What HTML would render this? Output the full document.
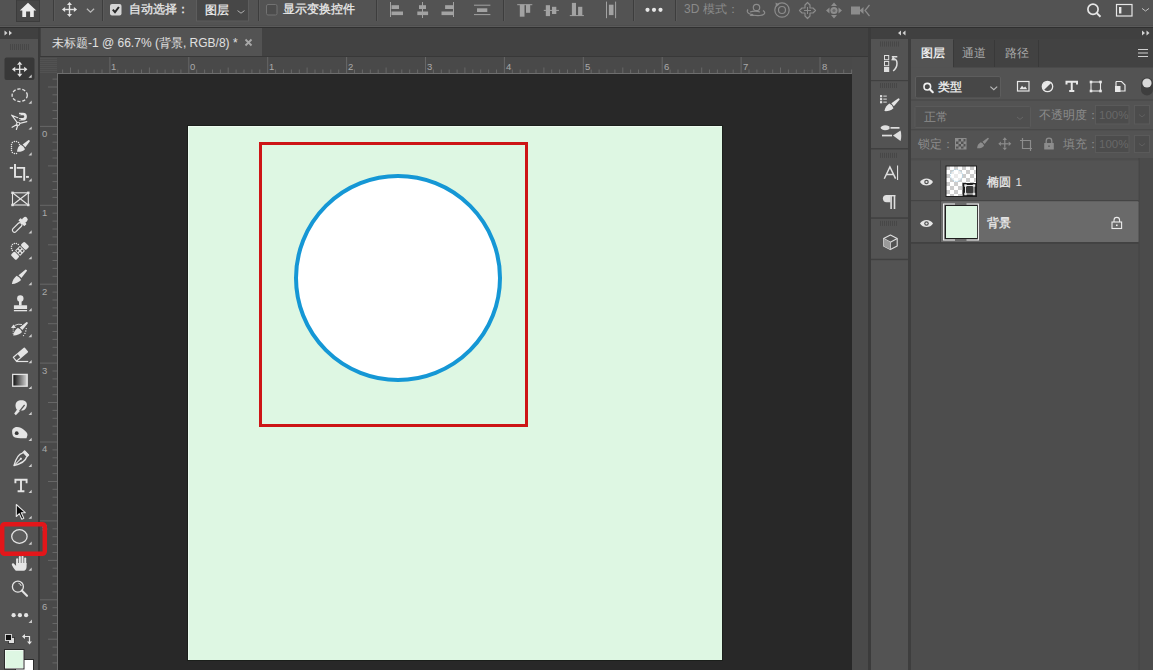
<!DOCTYPE html>
<html><head><meta charset="utf-8">
<style>
*{margin:0;padding:0;box-sizing:border-box}
html,body{width:1153px;height:670px;overflow:hidden;background:#535353;font-family:"Liberation Sans",sans-serif;color:#e6e6e6}
.a{position:absolute}
.t{position:absolute;white-space:nowrap;line-height:1}
.b{-webkit-text-stroke:0.3px currentColor}
svg.s{position:absolute;left:0;top:0;width:1153px;height:670px;overflow:visible}
</style></head><body>

<div class="a" style="left:0px;top:0px;width:1153px;height:27px;background:#535353;"></div>
<div class="a" style="left:0px;top:25px;width:1153px;height:1px;background:#4e4e4e;"></div>
<div class="a" style="left:0px;top:26px;width:1153px;height:1px;background:#5a5a5a;"></div>
<div class="a" style="left:40px;top:27px;width:829px;height:29px;background:#424242;"></div>
<div class="a" style="left:41px;top:28px;width:221px;height:28px;background:#535353;"></div>
<div class="a" style="left:40px;top:56px;width:829px;height:1px;background:#383838;"></div>
<div class="a" style="left:0px;top:27px;width:38px;height:643px;background:#535353;"></div>
<div class="a" style="left:0px;top:27px;width:38px;height:12px;background:#404040;"></div>
<div class="a" style="left:38px;top:27px;width:2px;height:643px;background:#3a3a3a;"></div>
<div class="a" style="left:40px;top:57px;width:816px;height:16px;background:#494949;"></div>
<div class="a" style="left:40px;top:57px;width:17px;height:613px;background:#494949;"></div>
<div class="a" style="left:58px;top:74px;width:794px;height:596px;background:#282828;"></div>
<div class="a" style="left:852px;top:57px;width:16px;height:613px;background:#4a4a4a;"></div>
<div class="a" style="left:57px;top:73px;width:795px;height:1px;background:#6e6e6e;"></div>
<div class="a" style="left:57px;top:73px;width:1px;height:597px;background:#6e6e6e;"></div>
<div class="a" style="left:187px;top:125px;width:536px;height:536px;background:#1b1f1b;"></div>
<div class="a" style="left:188px;top:126px;width:534px;height:534px;background:#eefcf0;"></div>
<div class="a" style="left:189px;top:127px;width:533px;height:533px;background:#def7e3;"></div>
<div class="a" style="left:259px;top:142px;width:269px;height:285px;border:3px solid #cd1516"></div>
<div class="a" style="left:294px;top:174px;width:208px;height:208px;border-radius:50%;border:4px solid #1597d5;background:#fff"></div>
<div class="a" style="left:868px;top:27px;width:3px;height:643px;background:#3b3b3b;"></div>
<div class="a" style="left:871px;top:27px;width:282px;height:12px;background:#404040;"></div>
<div class="a" style="left:871px;top:39px;width:37px;height:631px;background:#535353;"></div>
<div class="a" style="left:908px;top:39px;width:3px;height:631px;background:#3e3e3e;"></div>
<div class="a" style="left:911px;top:39px;width:242px;height:631px;background:#535353;"></div>
<div class="a" style="left:0px;top:27px;width:1153px;height:1px;background:#303030;"></div>
<svg class="s" viewBox="0 0 1153 670"><line x1="62.6" y1="69.5" x2="62.6" y2="73" stroke="#676767" stroke-width="1"/>
<line x1="70.5" y1="67.5" x2="70.5" y2="73" stroke="#676767" stroke-width="1"/>
<line x1="78.3" y1="69.5" x2="78.3" y2="73" stroke="#676767" stroke-width="1"/>
<line x1="86.2" y1="69.5" x2="86.2" y2="73" stroke="#676767" stroke-width="1"/>
<line x1="94.1" y1="69.5" x2="94.1" y2="73" stroke="#676767" stroke-width="1"/>
<line x1="102.0" y1="69.5" x2="102.0" y2="73" stroke="#676767" stroke-width="1"/>
<line x1="109.9" y1="57" x2="109.9" y2="73" stroke="#676767" stroke-width="1"/>
<line x1="117.8" y1="69.5" x2="117.8" y2="73" stroke="#676767" stroke-width="1"/>
<line x1="125.7" y1="69.5" x2="125.7" y2="73" stroke="#676767" stroke-width="1"/>
<line x1="133.6" y1="69.5" x2="133.6" y2="73" stroke="#676767" stroke-width="1"/>
<line x1="141.5" y1="69.5" x2="141.5" y2="73" stroke="#676767" stroke-width="1"/>
<line x1="149.4" y1="67.5" x2="149.4" y2="73" stroke="#676767" stroke-width="1"/>
<line x1="157.2" y1="69.5" x2="157.2" y2="73" stroke="#676767" stroke-width="1"/>
<line x1="165.1" y1="69.5" x2="165.1" y2="73" stroke="#676767" stroke-width="1"/>
<line x1="173.0" y1="69.5" x2="173.0" y2="73" stroke="#676767" stroke-width="1"/>
<line x1="180.9" y1="69.5" x2="180.9" y2="73" stroke="#676767" stroke-width="1"/>
<line x1="188.8" y1="57" x2="188.8" y2="73" stroke="#676767" stroke-width="1"/>
<line x1="196.7" y1="69.5" x2="196.7" y2="73" stroke="#676767" stroke-width="1"/>
<line x1="204.6" y1="69.5" x2="204.6" y2="73" stroke="#676767" stroke-width="1"/>
<line x1="212.5" y1="69.5" x2="212.5" y2="73" stroke="#676767" stroke-width="1"/>
<line x1="220.4" y1="69.5" x2="220.4" y2="73" stroke="#676767" stroke-width="1"/>
<line x1="228.2" y1="67.5" x2="228.2" y2="73" stroke="#676767" stroke-width="1"/>
<line x1="236.1" y1="69.5" x2="236.1" y2="73" stroke="#676767" stroke-width="1"/>
<line x1="244.0" y1="69.5" x2="244.0" y2="73" stroke="#676767" stroke-width="1"/>
<line x1="251.9" y1="69.5" x2="251.9" y2="73" stroke="#676767" stroke-width="1"/>
<line x1="259.8" y1="69.5" x2="259.8" y2="73" stroke="#676767" stroke-width="1"/>
<line x1="267.7" y1="57" x2="267.7" y2="73" stroke="#676767" stroke-width="1"/>
<line x1="275.6" y1="69.5" x2="275.6" y2="73" stroke="#676767" stroke-width="1"/>
<line x1="283.5" y1="69.5" x2="283.5" y2="73" stroke="#676767" stroke-width="1"/>
<line x1="291.4" y1="69.5" x2="291.4" y2="73" stroke="#676767" stroke-width="1"/>
<line x1="299.3" y1="69.5" x2="299.3" y2="73" stroke="#676767" stroke-width="1"/>
<line x1="307.1" y1="67.5" x2="307.1" y2="73" stroke="#676767" stroke-width="1"/>
<line x1="315.0" y1="69.5" x2="315.0" y2="73" stroke="#676767" stroke-width="1"/>
<line x1="322.9" y1="69.5" x2="322.9" y2="73" stroke="#676767" stroke-width="1"/>
<line x1="330.8" y1="69.5" x2="330.8" y2="73" stroke="#676767" stroke-width="1"/>
<line x1="338.7" y1="69.5" x2="338.7" y2="73" stroke="#676767" stroke-width="1"/>
<line x1="346.6" y1="57" x2="346.6" y2="73" stroke="#676767" stroke-width="1"/>
<line x1="354.5" y1="69.5" x2="354.5" y2="73" stroke="#676767" stroke-width="1"/>
<line x1="362.4" y1="69.5" x2="362.4" y2="73" stroke="#676767" stroke-width="1"/>
<line x1="370.3" y1="69.5" x2="370.3" y2="73" stroke="#676767" stroke-width="1"/>
<line x1="378.2" y1="69.5" x2="378.2" y2="73" stroke="#676767" stroke-width="1"/>
<line x1="386.1" y1="67.5" x2="386.1" y2="73" stroke="#676767" stroke-width="1"/>
<line x1="393.9" y1="69.5" x2="393.9" y2="73" stroke="#676767" stroke-width="1"/>
<line x1="401.8" y1="69.5" x2="401.8" y2="73" stroke="#676767" stroke-width="1"/>
<line x1="409.7" y1="69.5" x2="409.7" y2="73" stroke="#676767" stroke-width="1"/>
<line x1="417.6" y1="69.5" x2="417.6" y2="73" stroke="#676767" stroke-width="1"/>
<line x1="425.5" y1="57" x2="425.5" y2="73" stroke="#676767" stroke-width="1"/>
<line x1="433.4" y1="69.5" x2="433.4" y2="73" stroke="#676767" stroke-width="1"/>
<line x1="441.3" y1="69.5" x2="441.3" y2="73" stroke="#676767" stroke-width="1"/>
<line x1="449.2" y1="69.5" x2="449.2" y2="73" stroke="#676767" stroke-width="1"/>
<line x1="457.1" y1="69.5" x2="457.1" y2="73" stroke="#676767" stroke-width="1"/>
<line x1="464.9" y1="67.5" x2="464.9" y2="73" stroke="#676767" stroke-width="1"/>
<line x1="472.8" y1="69.5" x2="472.8" y2="73" stroke="#676767" stroke-width="1"/>
<line x1="480.7" y1="69.5" x2="480.7" y2="73" stroke="#676767" stroke-width="1"/>
<line x1="488.6" y1="69.5" x2="488.6" y2="73" stroke="#676767" stroke-width="1"/>
<line x1="496.5" y1="69.5" x2="496.5" y2="73" stroke="#676767" stroke-width="1"/>
<line x1="504.4" y1="57" x2="504.4" y2="73" stroke="#676767" stroke-width="1"/>
<line x1="512.3" y1="69.5" x2="512.3" y2="73" stroke="#676767" stroke-width="1"/>
<line x1="520.2" y1="69.5" x2="520.2" y2="73" stroke="#676767" stroke-width="1"/>
<line x1="528.1" y1="69.5" x2="528.1" y2="73" stroke="#676767" stroke-width="1"/>
<line x1="536.0" y1="69.5" x2="536.0" y2="73" stroke="#676767" stroke-width="1"/>
<line x1="543.9" y1="67.5" x2="543.9" y2="73" stroke="#676767" stroke-width="1"/>
<line x1="551.7" y1="69.5" x2="551.7" y2="73" stroke="#676767" stroke-width="1"/>
<line x1="559.6" y1="69.5" x2="559.6" y2="73" stroke="#676767" stroke-width="1"/>
<line x1="567.5" y1="69.5" x2="567.5" y2="73" stroke="#676767" stroke-width="1"/>
<line x1="575.4" y1="69.5" x2="575.4" y2="73" stroke="#676767" stroke-width="1"/>
<line x1="583.3" y1="57" x2="583.3" y2="73" stroke="#676767" stroke-width="1"/>
<line x1="591.2" y1="69.5" x2="591.2" y2="73" stroke="#676767" stroke-width="1"/>
<line x1="599.1" y1="69.5" x2="599.1" y2="73" stroke="#676767" stroke-width="1"/>
<line x1="607.0" y1="69.5" x2="607.0" y2="73" stroke="#676767" stroke-width="1"/>
<line x1="614.9" y1="69.5" x2="614.9" y2="73" stroke="#676767" stroke-width="1"/>
<line x1="622.8" y1="67.5" x2="622.8" y2="73" stroke="#676767" stroke-width="1"/>
<line x1="630.6" y1="69.5" x2="630.6" y2="73" stroke="#676767" stroke-width="1"/>
<line x1="638.5" y1="69.5" x2="638.5" y2="73" stroke="#676767" stroke-width="1"/>
<line x1="646.4" y1="69.5" x2="646.4" y2="73" stroke="#676767" stroke-width="1"/>
<line x1="654.3" y1="69.5" x2="654.3" y2="73" stroke="#676767" stroke-width="1"/>
<line x1="662.2" y1="57" x2="662.2" y2="73" stroke="#676767" stroke-width="1"/>
<line x1="670.1" y1="69.5" x2="670.1" y2="73" stroke="#676767" stroke-width="1"/>
<line x1="678.0" y1="69.5" x2="678.0" y2="73" stroke="#676767" stroke-width="1"/>
<line x1="685.9" y1="69.5" x2="685.9" y2="73" stroke="#676767" stroke-width="1"/>
<line x1="693.8" y1="69.5" x2="693.8" y2="73" stroke="#676767" stroke-width="1"/>
<line x1="701.7" y1="67.5" x2="701.7" y2="73" stroke="#676767" stroke-width="1"/>
<line x1="709.5" y1="69.5" x2="709.5" y2="73" stroke="#676767" stroke-width="1"/>
<line x1="717.4" y1="69.5" x2="717.4" y2="73" stroke="#676767" stroke-width="1"/>
<line x1="725.3" y1="69.5" x2="725.3" y2="73" stroke="#676767" stroke-width="1"/>
<line x1="733.2" y1="69.5" x2="733.2" y2="73" stroke="#676767" stroke-width="1"/>
<line x1="741.1" y1="57" x2="741.1" y2="73" stroke="#676767" stroke-width="1"/>
<line x1="749.0" y1="69.5" x2="749.0" y2="73" stroke="#676767" stroke-width="1"/>
<line x1="756.9" y1="69.5" x2="756.9" y2="73" stroke="#676767" stroke-width="1"/>
<line x1="764.8" y1="69.5" x2="764.8" y2="73" stroke="#676767" stroke-width="1"/>
<line x1="772.7" y1="69.5" x2="772.7" y2="73" stroke="#676767" stroke-width="1"/>
<line x1="780.5" y1="67.5" x2="780.5" y2="73" stroke="#676767" stroke-width="1"/>
<line x1="788.4" y1="69.5" x2="788.4" y2="73" stroke="#676767" stroke-width="1"/>
<line x1="796.3" y1="69.5" x2="796.3" y2="73" stroke="#676767" stroke-width="1"/>
<line x1="804.2" y1="69.5" x2="804.2" y2="73" stroke="#676767" stroke-width="1"/>
<line x1="812.1" y1="69.5" x2="812.1" y2="73" stroke="#676767" stroke-width="1"/>
<line x1="820.0" y1="57" x2="820.0" y2="73" stroke="#676767" stroke-width="1"/>
<line x1="827.9" y1="69.5" x2="827.9" y2="73" stroke="#676767" stroke-width="1"/>
<line x1="835.8" y1="69.5" x2="835.8" y2="73" stroke="#676767" stroke-width="1"/>
<line x1="843.7" y1="69.5" x2="843.7" y2="73" stroke="#676767" stroke-width="1"/>
<line x1="851.6" y1="69.5" x2="851.6" y2="73" stroke="#676767" stroke-width="1"/>
<line x1="52.5" y1="79.1" x2="57" y2="79.1" stroke="#676767" stroke-width="1"/>
<line x1="48" y1="87.0" x2="57" y2="87.0" stroke="#676767" stroke-width="1"/>
<line x1="52.5" y1="94.8" x2="57" y2="94.8" stroke="#676767" stroke-width="1"/>
<line x1="52.5" y1="102.7" x2="57" y2="102.7" stroke="#676767" stroke-width="1"/>
<line x1="52.5" y1="110.6" x2="57" y2="110.6" stroke="#676767" stroke-width="1"/>
<line x1="52.5" y1="118.5" x2="57" y2="118.5" stroke="#676767" stroke-width="1"/>
<line x1="40" y1="126.4" x2="57" y2="126.4" stroke="#676767" stroke-width="1"/>
<line x1="52.5" y1="134.3" x2="57" y2="134.3" stroke="#676767" stroke-width="1"/>
<line x1="52.5" y1="142.2" x2="57" y2="142.2" stroke="#676767" stroke-width="1"/>
<line x1="52.5" y1="150.1" x2="57" y2="150.1" stroke="#676767" stroke-width="1"/>
<line x1="52.5" y1="158.0" x2="57" y2="158.0" stroke="#676767" stroke-width="1"/>
<line x1="48" y1="165.9" x2="57" y2="165.9" stroke="#676767" stroke-width="1"/>
<line x1="52.5" y1="173.7" x2="57" y2="173.7" stroke="#676767" stroke-width="1"/>
<line x1="52.5" y1="181.6" x2="57" y2="181.6" stroke="#676767" stroke-width="1"/>
<line x1="52.5" y1="189.5" x2="57" y2="189.5" stroke="#676767" stroke-width="1"/>
<line x1="52.5" y1="197.4" x2="57" y2="197.4" stroke="#676767" stroke-width="1"/>
<line x1="40" y1="205.3" x2="57" y2="205.3" stroke="#676767" stroke-width="1"/>
<line x1="52.5" y1="213.2" x2="57" y2="213.2" stroke="#676767" stroke-width="1"/>
<line x1="52.5" y1="221.1" x2="57" y2="221.1" stroke="#676767" stroke-width="1"/>
<line x1="52.5" y1="229.0" x2="57" y2="229.0" stroke="#676767" stroke-width="1"/>
<line x1="52.5" y1="236.9" x2="57" y2="236.9" stroke="#676767" stroke-width="1"/>
<line x1="48" y1="244.8" x2="57" y2="244.8" stroke="#676767" stroke-width="1"/>
<line x1="52.5" y1="252.6" x2="57" y2="252.6" stroke="#676767" stroke-width="1"/>
<line x1="52.5" y1="260.5" x2="57" y2="260.5" stroke="#676767" stroke-width="1"/>
<line x1="52.5" y1="268.4" x2="57" y2="268.4" stroke="#676767" stroke-width="1"/>
<line x1="52.5" y1="276.3" x2="57" y2="276.3" stroke="#676767" stroke-width="1"/>
<line x1="40" y1="284.2" x2="57" y2="284.2" stroke="#676767" stroke-width="1"/>
<line x1="52.5" y1="292.1" x2="57" y2="292.1" stroke="#676767" stroke-width="1"/>
<line x1="52.5" y1="300.0" x2="57" y2="300.0" stroke="#676767" stroke-width="1"/>
<line x1="52.5" y1="307.9" x2="57" y2="307.9" stroke="#676767" stroke-width="1"/>
<line x1="52.5" y1="315.8" x2="57" y2="315.8" stroke="#676767" stroke-width="1"/>
<line x1="48" y1="323.7" x2="57" y2="323.7" stroke="#676767" stroke-width="1"/>
<line x1="52.5" y1="331.5" x2="57" y2="331.5" stroke="#676767" stroke-width="1"/>
<line x1="52.5" y1="339.4" x2="57" y2="339.4" stroke="#676767" stroke-width="1"/>
<line x1="52.5" y1="347.3" x2="57" y2="347.3" stroke="#676767" stroke-width="1"/>
<line x1="52.5" y1="355.2" x2="57" y2="355.2" stroke="#676767" stroke-width="1"/>
<line x1="40" y1="363.1" x2="57" y2="363.1" stroke="#676767" stroke-width="1"/>
<line x1="52.5" y1="371.0" x2="57" y2="371.0" stroke="#676767" stroke-width="1"/>
<line x1="52.5" y1="378.9" x2="57" y2="378.9" stroke="#676767" stroke-width="1"/>
<line x1="52.5" y1="386.8" x2="57" y2="386.8" stroke="#676767" stroke-width="1"/>
<line x1="52.5" y1="394.7" x2="57" y2="394.7" stroke="#676767" stroke-width="1"/>
<line x1="48" y1="402.5" x2="57" y2="402.5" stroke="#676767" stroke-width="1"/>
<line x1="52.5" y1="410.4" x2="57" y2="410.4" stroke="#676767" stroke-width="1"/>
<line x1="52.5" y1="418.3" x2="57" y2="418.3" stroke="#676767" stroke-width="1"/>
<line x1="52.5" y1="426.2" x2="57" y2="426.2" stroke="#676767" stroke-width="1"/>
<line x1="52.5" y1="434.1" x2="57" y2="434.1" stroke="#676767" stroke-width="1"/>
<line x1="40" y1="442.0" x2="57" y2="442.0" stroke="#676767" stroke-width="1"/>
<line x1="52.5" y1="449.9" x2="57" y2="449.9" stroke="#676767" stroke-width="1"/>
<line x1="52.5" y1="457.8" x2="57" y2="457.8" stroke="#676767" stroke-width="1"/>
<line x1="52.5" y1="465.7" x2="57" y2="465.7" stroke="#676767" stroke-width="1"/>
<line x1="52.5" y1="473.6" x2="57" y2="473.6" stroke="#676767" stroke-width="1"/>
<line x1="48" y1="481.5" x2="57" y2="481.5" stroke="#676767" stroke-width="1"/>
<line x1="52.5" y1="489.3" x2="57" y2="489.3" stroke="#676767" stroke-width="1"/>
<line x1="52.5" y1="497.2" x2="57" y2="497.2" stroke="#676767" stroke-width="1"/>
<line x1="52.5" y1="505.1" x2="57" y2="505.1" stroke="#676767" stroke-width="1"/>
<line x1="52.5" y1="513.0" x2="57" y2="513.0" stroke="#676767" stroke-width="1"/>
<line x1="40" y1="520.9" x2="57" y2="520.9" stroke="#676767" stroke-width="1"/>
<line x1="52.5" y1="528.8" x2="57" y2="528.8" stroke="#676767" stroke-width="1"/>
<line x1="52.5" y1="536.7" x2="57" y2="536.7" stroke="#676767" stroke-width="1"/>
<line x1="52.5" y1="544.6" x2="57" y2="544.6" stroke="#676767" stroke-width="1"/>
<line x1="52.5" y1="552.5" x2="57" y2="552.5" stroke="#676767" stroke-width="1"/>
<line x1="48" y1="560.4" x2="57" y2="560.4" stroke="#676767" stroke-width="1"/>
<line x1="52.5" y1="568.2" x2="57" y2="568.2" stroke="#676767" stroke-width="1"/>
<line x1="52.5" y1="576.1" x2="57" y2="576.1" stroke="#676767" stroke-width="1"/>
<line x1="52.5" y1="584.0" x2="57" y2="584.0" stroke="#676767" stroke-width="1"/>
<line x1="52.5" y1="591.9" x2="57" y2="591.9" stroke="#676767" stroke-width="1"/>
<line x1="40" y1="599.8" x2="57" y2="599.8" stroke="#676767" stroke-width="1"/>
<line x1="52.5" y1="607.7" x2="57" y2="607.7" stroke="#676767" stroke-width="1"/>
<line x1="52.5" y1="615.6" x2="57" y2="615.6" stroke="#676767" stroke-width="1"/>
<line x1="52.5" y1="623.5" x2="57" y2="623.5" stroke="#676767" stroke-width="1"/>
<line x1="52.5" y1="631.4" x2="57" y2="631.4" stroke="#676767" stroke-width="1"/>
<line x1="48" y1="639.2" x2="57" y2="639.2" stroke="#676767" stroke-width="1"/>
<line x1="52.5" y1="647.1" x2="57" y2="647.1" stroke="#676767" stroke-width="1"/>
<line x1="52.5" y1="655.0" x2="57" y2="655.0" stroke="#676767" stroke-width="1"/>
<line x1="52.5" y1="662.9" x2="57" y2="662.9" stroke="#676767" stroke-width="1"/>
<rect x="16" y="0" width="24" height="22" fill="#474747"/>
<rect x="16.5" y="0" width="23" height="21.5" fill="none" stroke="#3c3c3c" stroke-width="1"/>
<path d="M28 2.8 L19.8 10.6 H22.3 V16.9 H26.1 V11.6 H30.1 V16.9 H33.8 V10.6 H36.3 Z" fill="#ececec"/>
<line x1="53.5" y1="0" x2="53.5" y2="21" stroke="#3d3d3d" stroke-width="1"/>
<line x1="54.5" y1="0" x2="54.5" y2="21" stroke="#5a5a5a" stroke-width="1"/>
<line x1="102.5" y1="0" x2="102.5" y2="21" stroke="#3d3d3d" stroke-width="1"/>
<line x1="103.5" y1="0" x2="103.5" y2="21" stroke="#5a5a5a" stroke-width="1"/>
<line x1="258.5" y1="0" x2="258.5" y2="21" stroke="#3d3d3d" stroke-width="1"/>
<line x1="259.5" y1="0" x2="259.5" y2="21" stroke="#5a5a5a" stroke-width="1"/>
<line x1="376.5" y1="0" x2="376.5" y2="21" stroke="#3d3d3d" stroke-width="1"/>
<line x1="377.5" y1="0" x2="377.5" y2="21" stroke="#5a5a5a" stroke-width="1"/>
<line x1="503.5" y1="0" x2="503.5" y2="21" stroke="#3d3d3d" stroke-width="1"/>
<line x1="504.5" y1="0" x2="504.5" y2="21" stroke="#5a5a5a" stroke-width="1"/>
<line x1="633.5" y1="0" x2="633.5" y2="21" stroke="#3d3d3d" stroke-width="1"/>
<line x1="634.5" y1="0" x2="634.5" y2="21" stroke="#5a5a5a" stroke-width="1"/>
<line x1="675.5" y1="0" x2="675.5" y2="21" stroke="#3d3d3d" stroke-width="1"/>
<line x1="676.5" y1="0" x2="676.5" y2="21" stroke="#5a5a5a" stroke-width="1"/>
<g fill="#e4e4e4"><g stroke="#e4e4e4" stroke-width="1.4"><line x1="65.1" y1="9.5" x2="73.89999999999999" y2="9.5"/><line x1="69.5" y1="5.1000000000000005" x2="69.5" y2="13.900000000000002"/></g><path d="M61.9 9.5 L65.1 7.0 V12.0 Z"/><path d="M77.1 9.5 L73.89999999999999 7.0 V12.0 Z"/><path d="M69.5 1.9000000000000004 L67.0 5.1000000000000005 H72.0 Z"/><path d="M69.5 17.1 L67.0 13.900000000000002 H72.0 Z"/></g>
<path d="M86.9 8.8 L90.5 12.200000000000001 L94.1 8.8" fill="none" stroke="#b8b8b8" stroke-width="1.3"/>
<rect x="110" y="4" width="11.5" height="11.5" rx="2" fill="#d6d6d6"/>
<path d="M112.8 9.6 L115 12.2 L118.9 7" fill="none" stroke="#2a2a2a" stroke-width="2"/>
<rect x="196.5" y="-1" width="52" height="22" fill="#474747" stroke="#5d5d5d" stroke-width="1"/>
<path d="M237.5 10.6 L241 13.2 L244.5 10.6" fill="none" stroke="#b0b0b0" stroke-width="1"/>
<rect x="266.5" y="4.5" width="10.5" height="10.5" rx="1.5" fill="#4c4c4c" stroke="#727272" stroke-width="1"/>
<line x1="390.5" y1="2" x2="390.5" y2="17" stroke="#a2a2a2" stroke-width="1"/>
<rect x="391.5" y="5.2" width="7.5" height="3.8" fill="#a2a2a2"/>
<rect x="391.5" y="11.5" width="11.5" height="3.5999999999999996" fill="#a2a2a2"/>
<line x1="422.5" y1="2" x2="422.5" y2="18" stroke="#a2a2a2" stroke-width="1"/>
<rect x="419" y="5.2" width="7" height="3.8" fill="#a2a2a2"/>
<rect x="417.3" y="11.5" width="10.800000000000011" height="3.5999999999999996" fill="#a2a2a2"/>
<line x1="453.5" y1="2" x2="453.5" y2="17" stroke="#a2a2a2" stroke-width="1"/>
<rect x="445.1" y="5.2" width="7.899999999999977" height="3.8" fill="#a2a2a2"/>
<rect x="441.5" y="11.5" width="11.5" height="3.5999999999999996" fill="#a2a2a2"/>
<line x1="474" y1="5.2" x2="490.4" y2="5.2" stroke="#a2a2a2" stroke-width="1"/>
<line x1="474" y1="14.6" x2="490.4" y2="14.6" stroke="#a2a2a2" stroke-width="1"/>
<rect x="477" y="8.3" width="10.300000000000011" height="3.6999999999999993" fill="#a2a2a2"/>
<line x1="517.2" y1="4.7" x2="532.3" y2="4.7" stroke="#a2a2a2" stroke-width="1"/>
<rect x="519.8" y="4.7" width="4.7000000000000455" height="12.0" fill="#a2a2a2"/>
<rect x="526" y="4.7" width="4.2000000000000455" height="8.100000000000001" fill="#a2a2a2"/>
<line x1="543.8" y1="10.4" x2="558.9" y2="10.4" stroke="#a2a2a2" stroke-width="1"/>
<rect x="545.8" y="5.2" width="4.2000000000000455" height="10.900000000000002" fill="#a2a2a2"/>
<rect x="552" y="6.8" width="4.2999999999999545" height="7.2" fill="#a2a2a2"/>
<line x1="569.8" y1="15.6" x2="583.9" y2="15.6" stroke="#a2a2a2" stroke-width="1"/>
<rect x="571.9" y="2.9" width="4.100000000000023" height="12.7" fill="#a2a2a2"/>
<rect x="578.1" y="6.8" width="4.199999999999932" height="8.8" fill="#a2a2a2"/>
<line x1="606.5" y1="1.6" x2="606.5" y2="18.2" stroke="#a2a2a2" stroke-width="1"/>
<line x1="615.6" y1="1.6" x2="615.6" y2="18.2" stroke="#a2a2a2" stroke-width="1"/>
<rect x="608.9" y="4.7" width="4.600000000000023" height="10.399999999999999" fill="#a2a2a2"/>
<circle cx="647.5" cy="9.8" r="2.1" fill="#e6e6e6"/>
<circle cx="654" cy="9.8" r="2.1" fill="#e6e6e6"/>
<circle cx="660.5" cy="9.8" r="2.1" fill="#e6e6e6"/>
<g fill="none" stroke="#8c8c8c" stroke-width="1.2"><circle cx="756.5" cy="7.5" r="3.2"/><path d="M748 9.5 C 745 13, 752 16, 760 15.5 C 765 15, 766 12.5, 763 10.5 M750 12 C 753 11, 757 11, 760 12"/><circle cx="782" cy="10" r="7.2"/><circle cx="782" cy="10" r="3.5"/></g>
<path d="M752 13.5 L749.5 16 H754.5 Z" fill="#8c8c8c"/><path d="M775.5 2.5 L779.5 4.5 L776 7 Z" fill="#8c8c8c"/>
<path d="M807.5 2.5 L810 5 V8 H813 L815.5 10.5 L813 13 H810 V16 L807.5 18.5 L805 16 V13 H802 L799.5 10.5 L802 8 H805 V5 Z" fill="none" stroke="#8c8c8c" stroke-width="1.2" stroke-linejoin="round"/>
<path d="M807.5 7 V14 M804 10.5 H811" stroke="#8c8c8c" stroke-width="1"/>
<path d="M834 2.5 L837 6 H831 Z M834 18.5 L837 15 H831 Z M826 10.5 L829.5 7.5 V13.5 Z M842 10.5 L838.5 7.5 V13.5 Z" fill="#8c8c8c"/><circle cx="834" cy="10.5" r="3.6" fill="#8c8c8c"/><circle cx="834" cy="10.5" r="1.6" fill="#6a6a6a"/>
<rect x="851" y="6.5" width="9" height="8" fill="#8c8c8c"/><path d="M859.5 10.5 L863.5 7 V14 Z" fill="#8c8c8c"/><path d="M869.5 5 L865 10.5 L869.5 16" fill="none" stroke="#8c8c8c" stroke-width="1.2"/>
<circle cx="1093" cy="9.3" r="5.1" fill="none" stroke="#e6e6e6" stroke-width="1.7"/><line x1="1096.8" y1="13.1" x2="1100.5" y2="16.8" stroke="#e6e6e6" stroke-width="2"/>
<rect x="1116.5" y="4.5" width="15.5" height="11.5" fill="none" stroke="#e6e6e6" stroke-width="1.2"/><rect x="1119" y="7" width="2.4" height="6.5" fill="#e6e6e6"/>
<path d="M1142.0 8.4 L1145.5 11.0 L1149.0 8.4" fill="none" stroke="#bdbdbd" stroke-width="1"/>
<path d="M245.5 39.5 L251.5 45.5 M251.5 39.5 L245.5 45.5" stroke="#a8a8a8" stroke-width="1.8"/>
<path d="M4.5 30.5 L7.5 33 L4.5 35.5 Z M9 30.5 L12 33 L9 35.5 Z" fill="#d2d2d2"/>
<line x1="10.5" y1="44" x2="10.5" y2="50" stroke="#474747" stroke-width="1"/>
<line x1="12.5" y1="44" x2="12.5" y2="50" stroke="#474747" stroke-width="1"/>
<line x1="14.5" y1="44" x2="14.5" y2="50" stroke="#474747" stroke-width="1"/>
<line x1="16.5" y1="44" x2="16.5" y2="50" stroke="#474747" stroke-width="1"/>
<line x1="18.5" y1="44" x2="18.5" y2="50" stroke="#474747" stroke-width="1"/>
<line x1="20.5" y1="44" x2="20.5" y2="50" stroke="#474747" stroke-width="1"/>
<line x1="22.5" y1="44" x2="22.5" y2="50" stroke="#474747" stroke-width="1"/>
<line x1="24.5" y1="44" x2="24.5" y2="50" stroke="#474747" stroke-width="1"/>
<line x1="26.5" y1="44" x2="26.5" y2="50" stroke="#474747" stroke-width="1"/>
<line x1="28.5" y1="44" x2="28.5" y2="50" stroke="#474747" stroke-width="1"/>
<rect x="4.5" y="57.5" width="30" height="22.5" rx="2" fill="#383838"/>
<g fill="#e4e4e4"><g stroke="#e4e4e4" stroke-width="1.3"><line x1="15.25" y1="69.3" x2="24.15" y2="69.3"/><line x1="19.7" y1="64.85" x2="19.7" y2="73.75"/></g><path d="M11.95 69.3 L15.25 66.7 V71.89999999999999 Z"/><path d="M27.45 69.3 L24.15 66.7 V71.89999999999999 Z"/><path d="M19.7 61.55 L17.099999999999998 64.85 H22.3 Z"/><path d="M19.7 77.05 L17.099999999999998 73.75 H22.3 Z"/></g>
<path d="M31.7 74.5 V77.7 H28.5 Z" fill="#cfcfcf"/>
<ellipse cx="19.7" cy="95.25" rx="7.6" ry="6.3" fill="none" stroke="#e4e4e4" stroke-width="1.3" stroke-dasharray="3.2 1.8"/>
<path d="M31.7 100.45 V103.65 H28.5 Z" fill="#cfcfcf"/>
<g fill="none" stroke="#e4e4e4" stroke-width="1.2" stroke-linecap="round"><path d="M11.7 115.2 L17.8 117.7 M11.7 115.2 L18.2 123.8 L26.8 121.6 M18.2 123.8 L12.1 127.3 M18.2 123.8 L16.4 129.5"/></g>
<circle cx="18.2" cy="123.8" r="1.6" fill="#535353" stroke="#e4e4e4" stroke-width="1.1"/>
<path d="M19 112.7 H23 A3.9 3.9 0 0 1 23 120.5 H19 V117.9 H23 A1.3 1.3 0 0 0 23 115.3 H19 Z" fill="#e4e4e4"/>
<rect x="19" y="114.3" width="1.6" height="1" fill="#535353"/><rect x="19" y="118.9" width="1.6" height="1" fill="#535353"/>
<path d="M31.7 126.39999999999999 V129.6 H28.5 Z" fill="#cfcfcf"/>
<circle cx="12.4" cy="142.5" r="0.75" fill="#e4e4e4"/>
<circle cx="14.4" cy="141.5" r="0.75" fill="#e4e4e4"/>
<circle cx="16.5" cy="141.5" r="0.75" fill="#e4e4e4"/>
<circle cx="18.5" cy="142.5" r="0.75" fill="#e4e4e4"/>
<circle cx="19.5" cy="144.5" r="0.75" fill="#e4e4e4"/>
<circle cx="11.5" cy="144.5" r="0.75" fill="#e4e4e4"/>
<circle cx="11.5" cy="146.5" r="0.75" fill="#e4e4e4"/>
<circle cx="11.5" cy="148.5" r="0.75" fill="#e4e4e4"/>
<circle cx="11.5" cy="150.5" r="0.75" fill="#e4e4e4"/>
<circle cx="12.4" cy="152.5" r="0.75" fill="#e4e4e4"/>
<circle cx="14.4" cy="153.5" r="0.75" fill="#e4e4e4"/>
<circle cx="16.5" cy="153.5" r="0.75" fill="#e4e4e4"/>
<g transform="translate(23.4,146.5) rotate(45)"><path d="M-0.9 -8.25 Q0 -9.05 0.9 -8.25 L2 -0.8 H-2 Z" fill="#e4e4e4"/><path d="M-3.1 0.8 Q0 -0.6 3.1 0.8 C3.3000000000000003 4, 1.5 6.25, -0.8 8.25 C-3 5.25, -3.4 4, -3.1 0.8 Z" fill="#e4e4e4"/></g>
<path d="M31.7 152.34999999999997 V155.54999999999998 H28.5 Z" fill="#cfcfcf"/>
<g fill="none" stroke="#e4e4e4" stroke-width="1.9"><path d="M15 163.9 V176.9 H22.1"/><path d="M9.8 167.9 H13"/><path d="M16.7 167.9 H24.2 V180.8"/><path d="M26 176.9 H28.9"/></g>
<path d="M31.7 178.29999999999998 V181.5 H28.5 Z" fill="#cfcfcf"/>
<g fill="none" stroke="#e4e4e4" stroke-width="1.1"><rect x="12.5" y="192.8" width="15.8" height="12.2"/><path d="M12.5 192.8 L28.3 205 M28.3 192.8 L12.5 205"/></g>
<rect x="11.3" y="191.60000000000002" width="2.4" height="2.4" fill="#e4e4e4"/>
<rect x="27.1" y="191.60000000000002" width="2.4" height="2.4" fill="#e4e4e4"/>
<rect x="11.3" y="203.8" width="2.4" height="2.4" fill="#e4e4e4"/>
<rect x="27.1" y="203.8" width="2.4" height="2.4" fill="#e4e4e4"/>
<g transform="translate(19.6,225) rotate(45)"><rect x="-2.1" y="-2.5" width="4.2" height="11.8" rx="2.1" fill="none" stroke="#e4e4e4" stroke-width="1.2"/><rect x="-4.2" y="-5.6" width="8.4" height="3.2" rx="0.6" fill="#e4e4e4"/><rect x="-2.5" y="-10.4" width="5" height="6" rx="2.5" fill="#e4e4e4"/></g>
<path d="M31.7 230.2 V233.4 H28.5 Z" fill="#cfcfcf"/>
<g transform="translate(20,250.8) rotate(45)"><rect x="-3.7" y="-9.6" width="7.4" height="5.3" rx="1.5" fill="#e4e4e4"/><rect x="-3.7" y="-3.5" width="7.4" height="7" rx="0.6" fill="#e4e4e4"/><rect x="-3.7" y="4.3" width="7.4" height="5.3" rx="1.5" fill="#e4e4e4"/><rect x="-2.6" y="-2.6" width="1.9" height="1.9" fill="#535353"/><rect x="0.7" y="-2.6" width="1.9" height="1.9" fill="#535353"/><rect x="-2.6" y="0.7" width="1.9" height="1.9" fill="#535353"/><rect x="0.7" y="0.7" width="1.9" height="1.9" fill="#535353"/></g>
<circle cx="12.4" cy="250.5" r="0.75" fill="#e4e4e4"/>
<circle cx="11.5" cy="248.4" r="0.75" fill="#e4e4e4"/>
<circle cx="11.5" cy="246.3" r="0.75" fill="#e4e4e4"/>
<circle cx="12.5" cy="244.4" r="0.75" fill="#e4e4e4"/>
<circle cx="14.4" cy="243.4" r="0.75" fill="#e4e4e4"/>
<circle cx="16.4" cy="243.4" r="0.75" fill="#e4e4e4"/>
<circle cx="18.3" cy="244.4" r="0.75" fill="#e4e4e4"/>
<path d="M31.7 256.15 V259.34999999999997 H28.5 Z" fill="#cfcfcf"/>
<g transform="translate(19.4,277.3) rotate(44)"><path d="M-1 -10.0 Q0 -10.8 1 -10.0 L2 -0.8 H-2 Z" fill="#e4e4e4"/><path d="M-3.1 0.8 Q0 -0.6 3.1 0.8 C3.3000000000000003 4, 1.5 8.0, -0.8 10.0 C-3 7.0, -3.4 4, -3.1 0.8 Z" fill="#e4e4e4"/></g>
<path d="M31.7 282.09999999999997 V285.29999999999995 H28.5 Z" fill="#cfcfcf"/>
<circle cx="20.3" cy="298.5" r="3.2" fill="#e4e4e4"/><rect x="19" y="300" width="2.6" height="5.5" fill="#e4e4e4"/><rect x="13.9" y="305.2" width="13.2" height="3.8" rx="0.5" fill="#e4e4e4"/><rect x="13.9" y="310" width="13.2" height="1.3" fill="#e4e4e4"/>
<path d="M31.7 308.04999999999995 V311.24999999999994 H28.5 Z" fill="#cfcfcf"/>
<g transform="translate(20.5,329.3) rotate(45)"><path d="M-0.9 -9.5 Q0 -10.3 0.9 -9.5 L1.9 -0.8 H-1.9 Z" fill="#e4e4e4"/><path d="M-3 0.8 Q0 -0.6 3 0.8 C3.2 4, 1.5 7.5, -0.8 9.5 C-3 6.5, -3.3 4, -3 0.8 Z" fill="#e4e4e4"/></g>
<path d="M11 327.9 L13.5 324.5 L16 327.9 Z" fill="#e4e4e4"/><path d="M14.5 325.5 Q18 323.5 22 324.5" fill="none" stroke="#e4e4e4" stroke-width="0.9"/><path d="M13.2 328.5 V334" stroke="#e4e4e4" stroke-width="1" stroke-dasharray="1 1.2"/>
<circle cx="26.3" cy="328.6" r="0.7" fill="#e4e4e4"/>
<circle cx="25.8" cy="331" r="0.7" fill="#e4e4e4"/>
<circle cx="24.9" cy="333.4" r="0.7" fill="#e4e4e4"/>
<circle cx="23.5" cy="335.6" r="0.7" fill="#e4e4e4"/>
<path d="M31.7 334.0 V337.2 H28.5 Z" fill="#cfcfcf"/>
<g transform="translate(20.4,354.6) rotate(-40)"><rect x="-7.8" y="-3.1" width="15.6" height="6.2" rx="0.8" fill="#e4e4e4"/><rect x="-6.6" y="-1.9" width="4.8" height="3.8" fill="#535353"/></g>
<path d="M16.2 361.5 H28.2" stroke="#e4e4e4" stroke-width="1.2"/>
<path d="M31.7 359.95 V363.15 H28.5 Z" fill="#cfcfcf"/>
<defs><linearGradient id="gr" x1="0" y1="0" x2="1" y2="0"><stop offset="0" stop-color="#0c0c0c"/><stop offset="1" stop-color="#d8d8d8"/></linearGradient></defs>
<rect x="12.7" y="374.4" width="14.5" height="11.8" fill="url(#gr)" stroke="#e4e4e4" stroke-width="1.3"/>
<path d="M31.7 385.9 V389.09999999999997 H28.5 Z" fill="#cfcfcf"/>
<path d="M16.6 409.5 C14.6 406, 15.2 400.8, 20 400.3 C24.5 399.8, 27.2 401.8, 26.9 405 C26.6 408.2, 24.6 410.6, 21.8 410.6 Z" fill="#e4e4e4"/>
<path d="M19.5 406.2 L14.2 413.6 L15.8 415.2 L22.5 408.6 Z" fill="#e4e4e4"/>
<path d="M24.6 405 L19.6 411.2" stroke="#535353" stroke-width="1.2"/>
<path d="M31.7 411.84999999999997 V415.04999999999995 H28.5 Z" fill="#cfcfcf"/>
<path d="M12.1 431.5 C12.1 428.5, 14.5 427, 17 427 C20 427, 21.5 428, 23.5 429.5 C25.5 431, 27.5 432.5, 27.5 435 L26.5 438.3 C23 438.3, 18 438.3, 15 437.5 C13 437, 12.1 434.5, 12.1 431.5 Z" fill="#e4e4e4"/><circle cx="16.7" cy="433.2" r="1.9" fill="#3a3a3a"/>
<path d="M31.7 437.8 V441.0 H28.5 Z" fill="#cfcfcf"/>
<g transform="translate(20.3,459.3) rotate(45)"><path d="M-2.9 -8.8 H2.9 V-5.8 C4.6 -3.2, 4.6 0.8, 0 9 C-4.6 0.8, -4.6 -3.2, -2.9 -5.8 Z" fill="none" stroke="#e4e4e4" stroke-width="1.3" stroke-linejoin="round"/><rect x="-2.9" y="-9.5" width="5.8" height="3.2" fill="#e4e4e4"/><path d="M0 -0.5 V8.5" stroke="#e4e4e4" stroke-width="1"/><circle cx="0" cy="-0.8" r="1.1" fill="#e4e4e4"/></g>
<path d="M31.7 463.75 V466.95 H28.5 Z" fill="#cfcfcf"/>
<path d="M15.4 483.2 V479.8 H26.6 V483.2 M21 479.8 V491.2 M17.6 491.2 H24.4" fill="none" stroke="#e4e4e4" stroke-width="1.9"/>
<path d="M31.7 489.7 V492.9 H28.5 Z" fill="#cfcfcf"/>
<path d="M16.3 504.5 V516.5 L19.3 513.6 L21.8 519.2 L23.8 518.3 L21.3 512.7 H25.3 Z" fill="#0a0a0a" stroke="#e4e4e4" stroke-width="1.1" stroke-linejoin="round"/>
<path d="M31.7 515.65 V518.85 H28.5 Z" fill="#cfcfcf"/>
<ellipse cx="19.4" cy="536.5" rx="7.7" ry="6.8" fill="#5d5d5d" stroke="#e4e4e4" stroke-width="1.3"/>
<path d="M31.7 541.6 V544.8 H28.5 Z" fill="#cfcfcf"/>
<path d="M15.8 570.8 C14.8 569.5, 13.2 567.5, 12 565.2 C11.3 563.8, 12.8 562.6, 14 563.8 L16.2 566 V563 H26.6 V566.5 C26.6 569, 25.5 570.8, 23.5 570.8 Z" fill="#e4e4e4"/>
<rect x="16.1" y="558.2" width="2.0" height="7.7999999999999545" rx="1" fill="#e4e4e4"/>
<rect x="18.8" y="556" width="2.0" height="9" rx="1" fill="#e4e4e4"/>
<rect x="21.5" y="555.8" width="2.0" height="9.200000000000045" rx="1" fill="#e4e4e4"/>
<rect x="24.2" y="557.6" width="2.0" height="7.899999999999977" rx="1" fill="#e4e4e4"/>
<path d="M31.7 567.5500000000001 V570.75 H28.5 Z" fill="#cfcfcf"/>
<circle cx="17.9" cy="586.7" r="5.5" fill="none" stroke="#e4e4e4" stroke-width="1.3"/><path d="M21.8 590.6 L27 595.8" stroke="#e4e4e4" stroke-width="2.1" stroke-linecap="round"/><path d="M18.5 583.3 A3.4 3.4 0 0 1 21.2 586" fill="none" stroke="#e4e4e4" stroke-width="1"/>
<circle cx="13.6" cy="615.2" r="2.1" fill="#e4e4e4"/>
<circle cx="19.9" cy="615.2" r="2.1" fill="#e4e4e4"/>
<circle cx="26.1" cy="615.2" r="2.1" fill="#e4e4e4"/>
<path d="M32 619.5 V623 H28.5 Z" fill="#c8c8c8"/>
<rect x="8.5" y="637.5" width="6" height="6" fill="#e0e0e0" stroke="#2a2a2a" stroke-width="0.8"/><rect x="5.5" y="634.5" width="6" height="6" fill="#111" stroke="#e0e0e0" stroke-width="0.9"/>
<path d="M23 636.5 H29.5 V642" fill="none" stroke="#e4e4e4" stroke-width="1.2"/><path d="M22 636.5 L25 634 V639 Z M29.5 644.5 L27 641.5 H32 Z" fill="#e4e4e4"/>
<rect x="15.5" y="659.5" width="18" height="18" fill="#ffffff" stroke="#2a2a2a" stroke-width="1"/>
<rect x="5" y="650" width="18.5" height="18.5" fill="#def7e3" stroke="#ffffff" stroke-width="1"/><rect x="4.5" y="649.5" width="19.5" height="19.5" fill="none" stroke="#2a2a2a" stroke-width="1"/>
<path d="M901 30.5 L898 33 L901 35.5 Z M905.5 30.5 L902.5 33 L905.5 35.5 Z" fill="#d2d2d2"/>
<path d="M1142 30.5 L1145 33 L1142 35.5 Z M1146.5 30.5 L1149.5 33 L1146.5 35.5 Z" fill="#d2d2d2"/>
<line x1="880.5" y1="41.5" x2="880.5" y2="46.5" stroke="#474747" stroke-width="1"/>
<line x1="882.5" y1="41.5" x2="882.5" y2="46.5" stroke="#474747" stroke-width="1"/>
<line x1="884.5" y1="41.5" x2="884.5" y2="46.5" stroke="#474747" stroke-width="1"/>
<line x1="886.5" y1="41.5" x2="886.5" y2="46.5" stroke="#474747" stroke-width="1"/>
<line x1="888.5" y1="41.5" x2="888.5" y2="46.5" stroke="#474747" stroke-width="1"/>
<line x1="890.5" y1="41.5" x2="890.5" y2="46.5" stroke="#474747" stroke-width="1"/>
<line x1="892.5" y1="41.5" x2="892.5" y2="46.5" stroke="#474747" stroke-width="1"/>
<line x1="894.5" y1="41.5" x2="894.5" y2="46.5" stroke="#474747" stroke-width="1"/>
<line x1="896.5" y1="41.5" x2="896.5" y2="46.5" stroke="#474747" stroke-width="1"/>
<line x1="898.5" y1="41.5" x2="898.5" y2="46.5" stroke="#474747" stroke-width="1"/>
<rect x="884.5" y="55.5" width="4.2" height="4.2" fill="none" stroke="#dedede" stroke-width="1"/><rect x="884.5" y="61.5" width="4.2" height="4.2" fill="none" stroke="#dedede" stroke-width="1"/><rect x="884" y="67" width="5.2" height="5" fill="#dedede"/>
<path d="M893.5 58.8 C897.8 59, 898.6 66.5, 893.2 71" fill="none" stroke="#dedede" stroke-width="1.5"/><path d="M891.2 60.2 L893.2 55.8 L895.2 60.5 Z" fill="#dedede"/><rect x="891.8" y="56" width="5.5" height="1.5" fill="#dedede"/>
<rect x="871" y="80" width="37" height="1.2" fill="#404040"/>
<line x1="880.5" y1="83.0" x2="880.5" y2="88.0" stroke="#474747" stroke-width="1"/>
<line x1="882.5" y1="83.0" x2="882.5" y2="88.0" stroke="#474747" stroke-width="1"/>
<line x1="884.5" y1="83.0" x2="884.5" y2="88.0" stroke="#474747" stroke-width="1"/>
<line x1="886.5" y1="83.0" x2="886.5" y2="88.0" stroke="#474747" stroke-width="1"/>
<line x1="888.5" y1="83.0" x2="888.5" y2="88.0" stroke="#474747" stroke-width="1"/>
<line x1="890.5" y1="83.0" x2="890.5" y2="88.0" stroke="#474747" stroke-width="1"/>
<line x1="892.5" y1="83.0" x2="892.5" y2="88.0" stroke="#474747" stroke-width="1"/>
<line x1="894.5" y1="83.0" x2="894.5" y2="88.0" stroke="#474747" stroke-width="1"/>
<line x1="896.5" y1="83.0" x2="896.5" y2="88.0" stroke="#474747" stroke-width="1"/>
<rect x="880" y="95.1" width="2.2" height="2.2" fill="#dedede"/><rect x="883.3" y="95.6" width="3.5" height="1" fill="#dedede"/>
<rect x="880" y="98.1" width="2.2" height="2.2" fill="#dedede"/><rect x="883.3" y="98.6" width="3.5" height="1" fill="#dedede"/>
<rect x="880" y="101.1" width="2.2" height="2.2" fill="#dedede"/><rect x="883.3" y="101.6" width="3.5" height="1" fill="#dedede"/>
<g transform="translate(892,105.3) rotate(48)"><path d="M-0.9 -9.5 Q0 -10.3 0.9 -9.5 L1.9 -0.8 H-1.9 Z" fill="#e4e4e4"/><path d="M-3.1 0.8 Q0 -0.6 3.1 0.8 C3.3000000000000003 4, 1.5 7.5, -0.8 9.5 C-3 6.5, -3.4 4, -3.1 0.8 Z" fill="#e4e4e4"/></g>
<path d="M880.5 127.8 C881.5 125, 886 124.5, 889.5 126.5 V129 C886 131, 881.5 130.5, 880.5 127.8 Z" fill="#dedede"/><rect x="890.5" y="127" width="9" height="1.7" fill="#dedede"/>
<rect x="882" y="134.7" width="10" height="1.7" fill="#dedede"/><path d="M893 135.5 L900.5 130.5 C901.5 133, 901.5 138, 900.5 141 Z" fill="#dedede"/>
<rect x="871" y="148" width="37" height="1.5" fill="#404040"/>
<line x1="880.5" y1="152.9" x2="880.5" y2="157.9" stroke="#474747" stroke-width="1"/>
<line x1="882.5" y1="152.9" x2="882.5" y2="157.9" stroke="#474747" stroke-width="1"/>
<line x1="884.5" y1="152.9" x2="884.5" y2="157.9" stroke="#474747" stroke-width="1"/>
<line x1="886.5" y1="152.9" x2="886.5" y2="157.9" stroke="#474747" stroke-width="1"/>
<line x1="888.5" y1="152.9" x2="888.5" y2="157.9" stroke="#474747" stroke-width="1"/>
<line x1="890.5" y1="152.9" x2="890.5" y2="157.9" stroke="#474747" stroke-width="1"/>
<line x1="892.5" y1="152.9" x2="892.5" y2="157.9" stroke="#474747" stroke-width="1"/>
<line x1="894.5" y1="152.9" x2="894.5" y2="157.9" stroke="#474747" stroke-width="1"/>
<line x1="896.5" y1="152.9" x2="896.5" y2="157.9" stroke="#474747" stroke-width="1"/>
<path d="M884.3 178.7 L889.9 167 L895.6 178.7 M886.4 174.5 H893.6" fill="none" stroke="#dedede" stroke-width="1.5"/><rect x="897" y="165.5" width="1.1" height="14.5" fill="#dedede"/>
<path d="M890.5 195 H886.5 A3.6 3.6 0 0 0 886.5 202.2 H890.5 Z" fill="#dedede"/><rect x="890.3" y="195" width="1.6" height="14" fill="#dedede"/><rect x="893.7" y="195" width="1.6" height="14" fill="#dedede"/><rect x="886" y="195" width="9.3" height="1.4" fill="#dedede"/>
<rect x="871" y="217.3" width="37" height="1.5" fill="#404040"/>
<line x1="880.5" y1="220.9" x2="880.5" y2="225.9" stroke="#474747" stroke-width="1"/>
<line x1="882.5" y1="220.9" x2="882.5" y2="225.9" stroke="#474747" stroke-width="1"/>
<line x1="884.5" y1="220.9" x2="884.5" y2="225.9" stroke="#474747" stroke-width="1"/>
<line x1="886.5" y1="220.9" x2="886.5" y2="225.9" stroke="#474747" stroke-width="1"/>
<line x1="888.5" y1="220.9" x2="888.5" y2="225.9" stroke="#474747" stroke-width="1"/>
<line x1="890.5" y1="220.9" x2="890.5" y2="225.9" stroke="#474747" stroke-width="1"/>
<line x1="892.5" y1="220.9" x2="892.5" y2="225.9" stroke="#474747" stroke-width="1"/>
<line x1="894.5" y1="220.9" x2="894.5" y2="225.9" stroke="#474747" stroke-width="1"/>
<line x1="896.5" y1="220.9" x2="896.5" y2="225.9" stroke="#474747" stroke-width="1"/>
<g fill="none" stroke="#dedede" stroke-width="1.1" stroke-linejoin="round"><path d="M890.4 235 L897.2 238.6 V246 L890.4 249.6 L883.6 246 V238.6 Z"/><path d="M883.6 238.6 L890.4 242.2 L897.2 238.6 M890.4 242.2 V249.6"/></g><path d="M883.6 238.6 L890.4 242.2 V249.6 L883.6 246 Z" fill="#9a9a9a"/>
<rect x="871" y="258.7" width="37" height="1.5" fill="#404040"/>
<rect x="953" y="39" width="200" height="28.5" fill="#424242"/>
<rect x="911" y="39" width="42" height="28.5" fill="#535353"/>
<line x1="994.5" y1="40" x2="994.5" y2="67" stroke="#393939" stroke-width="1"/><line x1="1038.5" y1="40" x2="1038.5" y2="67" stroke="#393939" stroke-width="1"/>
<line x1="953.5" y1="40" x2="953.5" y2="67" stroke="#393939" stroke-width="1"/>
<path d="M1138 49.5 H1148 M1138 53 H1148 M1138 56.5 H1148" stroke="#d0d0d0" stroke-width="1.1"/>
<rect x="915.5" y="76.5" width="85" height="21.5" rx="1.5" fill="#474747" stroke="#5d5d5d" stroke-width="1"/>
<circle cx="927.3" cy="86.7" r="3.3" fill="none" stroke="#f0f0f0" stroke-width="1.6"/><path d="M929.6 89 L932.8 92.2" stroke="#f0f0f0" stroke-width="2.1" stroke-linecap="round"/>
<path d="M990.4 86.6 L993.8 89.80000000000001 L997.1999999999999 86.6" fill="none" stroke="#b8b8b8" stroke-width="1.2"/>
<rect x="1017.5" y="81.5" width="11.5" height="9.5" fill="none" stroke="#e8e8e8" stroke-width="1.2"/><path d="M1019.5 89.2 L1022 85.8 L1023.8 87.8 L1025.2 86.5 L1027.2 89.2 Z" fill="#e8e8e8"/>
<circle cx="1047.5" cy="86.5" r="5.2" fill="none" stroke="#e8e8e8" stroke-width="1.3"/><path d="M1043.9 90.1 A5.1 5.1 0 0 1 1051.1 82.9 Z" fill="#e8e8e8"/>
<path d="M1066.5 84.5 V81.8 H1077 V84.5 M1071.75 81.8 V91 M1069.2 91 H1074.3" fill="none" stroke="#e8e8e8" stroke-width="2"/>
<rect x="1091" y="82" width="9.5" height="9" fill="none" stroke="#e8e8e8" stroke-width="1.1"/>
<rect x="1089.7" y="80.7" width="2.6" height="2.6" fill="#e8e8e8"/>
<rect x="1099.2" y="80.7" width="2.6" height="2.6" fill="#e8e8e8"/>
<rect x="1089.7" y="89.7" width="2.6" height="2.6" fill="#e8e8e8"/>
<rect x="1099.2" y="89.7" width="2.6" height="2.6" fill="#e8e8e8"/>
<path d="M1116 81.5 H1121.5 L1125 85 V91 H1120" fill="none" stroke="#e8e8e8" stroke-width="1.2"/><path d="M1116 81.5 V86" stroke="#e8e8e8" stroke-width="1.2"/><rect x="1115" y="86" width="5.5" height="6" fill="#e8e8e8"/>
<rect x="1141" y="77.5" width="12" height="18" rx="6" fill="#3e3e3e"/><circle cx="1147" cy="83" r="4.6" fill="#d8d8d8"/>
<rect x="911" y="99.5" width="242" height="1" fill="#474747"/>
<rect x="915" y="106.5" width="115.5" height="21" rx="1" fill="#4f4f4f" stroke="#5a5a5a" stroke-width="1"/>
<path d="M1017 117.0 L1020 119.4 L1023 117.0" fill="none" stroke="#666" stroke-width="1"/>
<rect x="1095.5" y="105.5" width="33.5" height="18.5" fill="#4c4c4c" stroke="#5a5a5a" stroke-width="1"/><rect x="1134.5" y="105.5" width="15" height="18.5" fill="#4c4c4c" stroke="#5a5a5a" stroke-width="1"/>
<path d="M1139 114.5 L1142 116.9 L1145 114.5" fill="none" stroke="#5f5f5f" stroke-width="1"/>
<rect x="911" y="129.3" width="242" height="1" fill="#474747"/>
<rect x="955.5" y="138.5" width="10.5" height="10.5" fill="none" stroke="#8c8c8c" stroke-width="1"/>
<rect x="956" y="139" width="2.5" height="2.5" fill="#8c8c8c"/>
<rect x="961" y="139" width="2.5" height="2.5" fill="#8c8c8c"/>
<rect x="958.5" y="141.5" width="2.5" height="2.5" fill="#8c8c8c"/>
<rect x="963.5" y="141.5" width="2.5" height="2.5" fill="#8c8c8c"/>
<rect x="956" y="144" width="2.5" height="2.5" fill="#8c8c8c"/>
<rect x="961" y="144" width="2.5" height="2.5" fill="#8c8c8c"/>
<rect x="958.5" y="146.5" width="2.5" height="2.5" fill="#8c8c8c"/>
<rect x="963.5" y="146.5" width="2.5" height="2.5" fill="#8c8c8c"/>
<g transform="translate(983,143.5) rotate(45)"><path d="M-0.7 -7.5 Q0 -8.3 0.7 -7.5 L1.5 -0.8 H-1.5 Z" fill="#8c8c8c"/><path d="M-2.4 0.8 Q0 -0.6 2.4 0.8 C2.6 4, 1.5 5.5, -0.8 7.5 C-3 4.5, -2.6999999999999997 4, -2.4 0.8 Z" fill="#8c8c8c"/></g>
<g fill="#8c8c8c"><g stroke="#8c8c8c" stroke-width="1.2"><line x1="1000.9" y1="143.8" x2="1008.6999999999999" y2="143.8"/><line x1="1004.8" y1="139.9" x2="1004.8" y2="147.70000000000002"/></g><path d="M998.3 143.8 L1000.9 141.60000000000002 V146.0 Z"/><path d="M1011.3 143.8 L1008.6999999999999 141.60000000000002 V146.0 Z"/><path d="M1004.8 137.3 L1002.5999999999999 139.9 H1007.0 Z"/><path d="M1004.8 150.3 L1002.5999999999999 147.70000000000002 H1007.0 Z"/></g>
<path d="M1022.5 138 V148.5 H1032 M1020 140.5 H1030.5 V151" fill="none" stroke="#8c8c8c" stroke-width="1.2"/>
<path d="M1046.2 143 V141 A2.8 2.8 0 0 1 1051.8 141 V143" fill="none" stroke="#8c8c8c" stroke-width="1.3"/><rect x="1044.2" y="143" width="9.6" height="6.6" rx="0.5" fill="#8c8c8c"/><rect x="1048.3" y="145.5" width="1.4" height="1.4" fill="#535353"/>
<rect x="1095.5" y="135.5" width="33.5" height="17" fill="#4c4c4c" stroke="#5a5a5a" stroke-width="1"/><rect x="1134.5" y="135.5" width="15" height="17" fill="#4c4c4c" stroke="#5a5a5a" stroke-width="1"/>
<path d="M1139 143.5 L1142 145.9 L1145 143.5" fill="none" stroke="#5f5f5f" stroke-width="1"/>
<rect x="911" y="158" width="242" height="512" fill="#4d4d4d"/>
<rect x="1138.5" y="158" width="14.5" height="512" fill="#4b4b4b"/><rect x="1138.5" y="158" width="1.2" height="512" fill="#474747"/>
<rect x="911" y="160.4" width="227.5" height="40" fill="#535353"/>
<rect x="940" y="160.4" width="1" height="82" fill="#474747"/>
<rect x="911" y="200.2" width="227.5" height="1" fill="#424242"/>
<rect x="941" y="201.2" width="197.5" height="41" rx="1" fill="#6a6a6a"/>
<rect x="911" y="201.2" width="29" height="41" fill="#535353"/>
<rect x="911" y="242.2" width="227.5" height="1.5" fill="#3f3f3f"/>
<path d="M920.0 182 C922.5 177.2, 930.5 177.2, 933.0 182 C930.5 186.8, 922.5 186.8, 920.0 182 Z" fill="#e6e6e6"/><circle cx="926.5" cy="182" r="2.3" fill="#535353"/><circle cx="926.5" cy="182" r="1.1" fill="#e6e6e6"/>
<path d="M920.0 223.5 C922.5 218.7, 930.5 218.7, 933.0 223.5 C930.5 228.3, 922.5 228.3, 920.0 223.5 Z" fill="#e6e6e6"/><circle cx="926.5" cy="223.5" r="2.3" fill="#535353"/><circle cx="926.5" cy="223.5" r="1.1" fill="#e6e6e6"/>
<defs><pattern id="chk" x="946" y="166" width="8" height="8" patternUnits="userSpaceOnUse"><rect width="8" height="8" fill="#ffffff"/><rect width="4" height="4" fill="#cccccc"/><rect x="4" y="4" width="4" height="4" fill="#cccccc"/></pattern></defs>
<rect x="945.5" y="165.5" width="31.5" height="31.5" fill="#1e1e1e"/>
<rect x="946.5" y="166.5" width="29.5" height="29.5" fill="url(#chk)"/>
<circle cx="956.5" cy="175.5" r="6" fill="#ffffff" fill-opacity="0.6" stroke="#9fd0ea" stroke-width="0.9" stroke-dasharray="1 1"/>
<rect x="962.5" y="183" width="14.5" height="14" fill="#1e1e1e"/>
<rect x="965.5" y="185.5" width="8.5" height="8.5" fill="#3a3a3a" stroke="#e8e8e8" stroke-width="1"/>
<rect x="964.3" y="184.3" width="2.4" height="2.4" fill="#e8e8e8"/>
<rect x="972.8" y="184.3" width="2.4" height="2.4" fill="#e8e8e8"/>
<rect x="964.3" y="192.8" width="2.4" height="2.4" fill="#e8e8e8"/>
<rect x="972.8" y="192.8" width="2.4" height="2.4" fill="#e8e8e8"/>
<rect x="945" y="205" width="33" height="34" fill="#1e1e1e"/>
<rect x="946" y="206" width="31" height="32" fill="#def7e3"/>
<path d="M955 204 H943.6 V240 H955 M966.5 204 H978.4 V240 H966.5" fill="none" stroke="#f2f2f2" stroke-width="1.1"/>
<path d="M1114 222 V220.2 A2.8 2.8 0 0 1 1119.6 220.2 V222" fill="none" stroke="#ececec" stroke-width="1.1"/><rect x="1112" y="222" width="9.6" height="6.5" fill="none" stroke="#ececec" stroke-width="1.1"/><rect x="1116" y="224.5" width="1.6" height="1.6" fill="#ececec"/>
<rect x="40" y="57" width="17" height="16" fill="#4b4b4b"/>
<line x1="40" y1="58.5" x2="57" y2="58.5" stroke="#525252" stroke-width="1"/>
<line x1="40" y1="60.5" x2="57" y2="60.5" stroke="#525252" stroke-width="1"/>
<line x1="40" y1="62.5" x2="57" y2="62.5" stroke="#525252" stroke-width="1"/>
<line x1="40" y1="64.5" x2="57" y2="64.5" stroke="#525252" stroke-width="1"/>
<line x1="40" y1="66.5" x2="57" y2="66.5" stroke="#525252" stroke-width="1"/>
<line x1="40" y1="68.5" x2="57" y2="68.5" stroke="#525252" stroke-width="1"/>
<line x1="40" y1="70.5" x2="57" y2="70.5" stroke="#525252" stroke-width="1"/>
<line x1="40" y1="72.5" x2="57" y2="72.5" stroke="#525252" stroke-width="1"/></svg>
<div class="t " style="left:111px;top:61.5px;font-size:9.5px;color:#aaaaaa;">1</div>
<div class="t " style="left:190px;top:61.5px;font-size:9.5px;color:#aaaaaa;">0</div>
<div class="t " style="left:269px;top:61.5px;font-size:9.5px;color:#aaaaaa;">1</div>
<div class="t " style="left:348px;top:61.5px;font-size:9.5px;color:#aaaaaa;">2</div>
<div class="t " style="left:427px;top:61.5px;font-size:9.5px;color:#aaaaaa;">3</div>
<div class="t " style="left:506px;top:61.5px;font-size:9.5px;color:#aaaaaa;">4</div>
<div class="t " style="left:585px;top:61.5px;font-size:9.5px;color:#aaaaaa;">5</div>
<div class="t " style="left:664px;top:61.5px;font-size:9.5px;color:#aaaaaa;">6</div>
<div class="t " style="left:743px;top:61.5px;font-size:9.5px;color:#aaaaaa;">7</div>
<div class="t " style="left:822px;top:61.5px;font-size:9.5px;color:#aaaaaa;">8</div>
<div class="t " style="left:42px;top:129px;font-size:9.5px;color:#aaaaaa;">0</div>
<div class="t " style="left:42px;top:208px;font-size:9.5px;color:#aaaaaa;">1</div>
<div class="t " style="left:42px;top:287px;font-size:9.5px;color:#aaaaaa;">2</div>
<div class="t " style="left:42px;top:366px;font-size:9.5px;color:#aaaaaa;">3</div>
<div class="t " style="left:42px;top:444px;font-size:9.5px;color:#aaaaaa;">4</div>
<div class="t " style="left:42px;top:523px;font-size:9.5px;color:#aaaaaa;">5</div>
<div class="t " style="left:42px;top:602px;font-size:9.5px;color:#aaaaaa;">6</div>
<div class="t b" style="left:128.5px;top:3px;font-size:12px;color:#e8e8e8;">自动选择：</div>
<div class="t b" style="left:204.5px;top:3.5px;font-size:12px;color:#ececec;">图层</div>
<div class="t b" style="left:283px;top:3px;font-size:12px;color:#e8e8e8;">显示变换控件</div>
<div class="t " style="left:684px;top:3px;font-size:12px;color:#8a8a8a;">3D 模式：</div>
<div class="t " style="left:52px;top:37px;font-size:12px;color:#e0e0e0;">未标题-1 @ 66.7% (背景, RGB/8) *</div>
<div class="t b" style="left:921px;top:47px;font-size:12px;color:#f6f6f6;">图层</div>
<div class="t " style="left:962px;top:47px;font-size:12px;color:#a8a8a8;">通道</div>
<div class="t " style="left:1005px;top:47px;font-size:12px;color:#a8a8a8;">路径</div>
<div class="t b" style="left:937.5px;top:81px;font-size:12px;color:#f2f2f2;">类型</div>
<div class="t " style="left:923.5px;top:111px;font-size:12px;color:#8c8c8c;">正常</div>
<div class="t " style="left:1039px;top:109px;font-size:12px;color:#8c8c8c;">不透明度：</div>
<div class="t " style="left:1099px;top:109.5px;font-size:11.5px;color:#686868;">100%</div>
<div class="t " style="left:918px;top:138px;font-size:12px;color:#8c8c8c;">锁定：</div>
<div class="t " style="left:1063px;top:138px;font-size:12px;color:#8c8c8c;">填充：</div>
<div class="t " style="left:1099px;top:138.5px;font-size:11.5px;color:#686868;">100%</div>
<div class="t b" style="left:986.5px;top:176px;font-size:12px;color:#e8e8e8;">椭圆</div>
<div class="t " style="left:1015.5px;top:176.5px;font-size:11.5px;color:#e0e0e0;">1</div>
<div class="t b" style="left:986.5px;top:217px;font-size:12px;color:#ececec;">背景</div>
<svg class="s" viewBox="0 0 1153 670"><rect x="2.2" y="524.2" width="42.6" height="29.6" rx="2.5" fill="none" stroke="#e3161a" stroke-width="4.5"/></svg>
</body></html>
